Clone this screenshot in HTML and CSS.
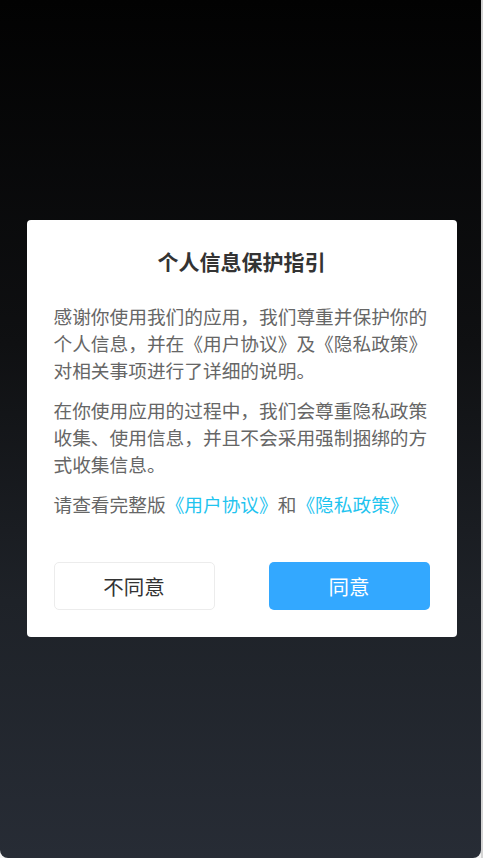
FILE: index.html
```html
<!DOCTYPE html>
<html lang="zh-CN">
<head>
<meta charset="utf-8">
<title>个人信息保护指引</title>
<link rel="stylesheet" href="styles.css">
</head>
<body>
<div class="screen">
  <div class="dialog">
    <h1 class="title">个人信息保护指引</h1>
    <p class="para">感谢你使用我们的应用，我们尊重并保护你的个人信息，并在《用户协议》及《隐私政策》对相关事项进行了详细的说明。</p>
    <p class="para">在你使用应用的过程中，我们会尊重隐私政策收集、使用信息，并且不会采用强制捆绑的方式收集信息。</p>
    <p class="para">请查看完整版<span class="link">《用户协议》</span>和<span class="link">《隐私政策》</span></p>
    <div class="actions">
      <button class="btn btn-ghost">不同意</button>
      <button class="btn btn-primary">同意</button>
    </div>
  </div>
</div>
<div class="edge"></div>
</body>
</html>
```
FILE: styles.css
```css
html, body {
  margin: 0;
  padding: 0;
  height: 100%;
}
body {
  display: flex;
  background: #f2f2f2;
  font-family: "Noto Sans CJK SC", "Noto Sans", sans-serif;
}
.screen {
  flex: 1;
  height: 858px;
  background: linear-gradient(180deg, #020202 0%, #0f1012 40%, #1e2228 70%, #272c35 100%);
  border-radius: 0 0 8px 8px;
  display: flex;
  align-items: flex-start;
  justify-content: center;
  padding-top: 220px;
  box-sizing: border-box;
}
.edge {
  width: 2px;
  background: #d4d4d4;
}
.dialog {
  width: 430px;
  margin-left: 2px;
  background: #fff;
  border-radius: 4px;
  padding: 0 27px 27px;
  box-sizing: border-box;
}
.title {
  margin: 0;
  padding-top: 26px;
  height: 56px;
  box-sizing: border-box;
  line-height: 30px;
  text-align: center;
  font-size: 21px;
  font-weight: bold;
  color: #333;
}
.para {
  margin: 0 0 13px;
  font-size: 18.7px;
  line-height: 27px;
  color: #666;
}
.title + .para {
  margin-top: 26px;
}
.link {
  color: #1fc4ef;
}
.actions {
  display: flex;
  justify-content: space-between;
  margin-top: 44.5px;
}
.btn {
  width: 161px;
  height: 48px;
  border-radius: 5px;
  font-family: "Noto Sans CJK SC", "Noto Sans", sans-serif;
  font-size: 20.5px;
  padding: 0;
  cursor: pointer;
}
.btn-ghost {
  background: #fff;
  border: 1px solid #ececec;
  color: #333;
}
.btn-primary {
  background: #33a8ff;
  border: none;
  color: #fff;
}
```
